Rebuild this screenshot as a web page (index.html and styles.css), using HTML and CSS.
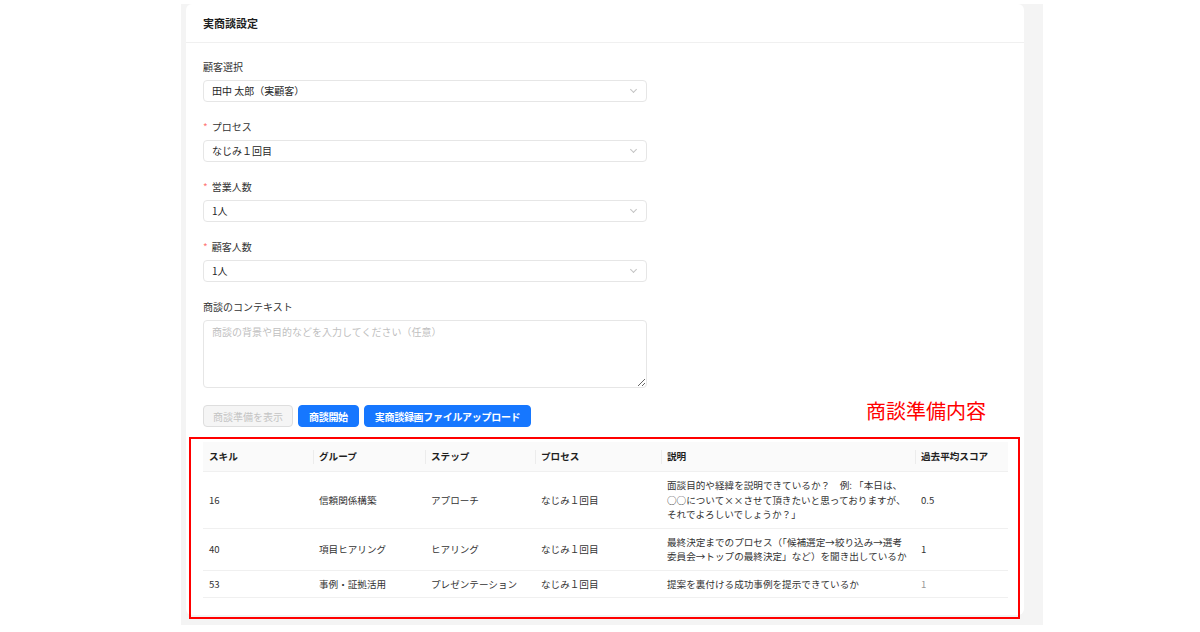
FILE: index.html
```html
<!DOCTYPE html>
<html lang="ja">
<head>
    <meta charset="UTF-8">
    <meta name="viewport" content="width=device-width, initial-scale=1.0">
    <title>実商談設定</title>
    <link rel="stylesheet" href="styles.css">
</head>
<body>
    <div class="frame">
        <div class="card">
            <div class="card-header">実商談設定</div>
            <div class="card-body">
                <div class="form">
                    <div class="form-item">
                        <div class="form-label">顧客選択</div>
                        <div class="select">田中 太郎（実顧客）<span class="arrow"></span></div>
                    </div>
                    <div class="form-item">
                        <div class="form-label required">プロセス</div>
                        <div class="select">なじみ１回目<span class="arrow"></span></div>
                    </div>
                    <div class="form-item">
                        <div class="form-label required">営業人数</div>
                        <div class="select">1人<span class="arrow"></span></div>
                    </div>
                    <div class="form-item">
                        <div class="form-label required">顧客人数</div>
                        <div class="select">1人<span class="arrow"></span></div>
                    </div>
                    <div class="form-item">
                        <div class="form-label">商談のコンテキスト</div>
                        <textarea class="textarea" placeholder="商談の背景や目的などを入力してください（任意）"></textarea>
                    </div>
                    <div class="buttons">
                        <button class="btn" disabled>商談準備を表示</button>
                        <button class="btn btn-primary">商談開始</button>
                        <button class="btn btn-primary">実商談録画ファイルアップロード</button>
                    </div>
                </div>

                <table class="table">
                    <thead>
                        <tr>
                            <th class="col-skill">スキル</th>
                            <th class="col-group">グループ</th>
                            <th class="col-step">ステップ</th>
                            <th class="col-process">プロセス</th>
                            <th class="col-desc">説明</th>
                            <th>過去平均スコア</th>
                        </tr>
                    </thead>
                    <tbody>
                        <tr>
                            <td>16</td>
                            <td>信頼関係構築</td>
                            <td>アプローチ</td>
                            <td>なじみ１回目</td>
                            <td>面談目的や経緯を説明できているか？　例: 「本日は、○○について××させて頂きたいと思っておりますが、それでよろしいでしょうか？」</td>
                            <td>0.5</td>
                        </tr>
                        <tr>
                            <td>40</td>
                            <td>項目ヒアリング</td>
                            <td>ヒアリング</td>
                            <td>なじみ１回目</td>
                            <td>最終決定までのプロセス（「候補選定→絞り込み→選考委員会→トップの最終決定」など）を聞き出しているか</td>
                            <td>1</td>
                        </tr>
                        <tr>
                            <td>53</td>
                            <td>事例・証拠活用</td>
                            <td>プレゼンテーション</td>
                            <td>なじみ１回目</td>
                            <td>提案を裏付ける成功事例を提示できているか</td>
                            <td class="muted">1</td>
                        </tr>
                    </tbody>
                </table>
            </div>
        </div>

        <!-- 注釈 -->
        <div class="note-label">商談準備内容</div>
        <div class="note-box"></div>
    </div>
</body>
</html>
```

FILE: styles.css
```css
body, html {
    margin: 0;
    background-color: #ffffff;
    font-family: "Noto Sans CJK JP", "Noto Sans", sans-serif;
    color: #262626;
}
.frame {
    position: relative;
    width: 857px;
    height: 621px;
    margin: 4px 0 0 181px;
    padding-left: 5px;
    background-color: #f4f4f4;
}
.card {
    width: 838px;
    height: 611px;
    background-color: #ffffff;
    border-radius: 6px;
}
.card-header {
    height: 38px;
    line-height: 38px;
    padding-left: 17px;
    font-size: 11px;
    font-weight: bold;
    color: #1f1f1f;
    border-bottom: 1px solid #f0f0f0;
}
.card-body {
    padding: 16px 16px 0 17px;
}
.form {
    width: 444px;
}
.form-item {
    margin-bottom: 17px;
}
.form-label {
    font-size: 10px;
    line-height: 16px;
    margin-bottom: 5px;
    color: #333;
}
.form-label.required::before {
    content: '*';
    color: #ff7875;
    margin-right: 4px;
}
.select {
    position: relative;
    box-sizing: border-box;
    height: 22px;
    line-height: 20px;
    padding: 0 8px;
    font-size: 10px;
    border: 1px solid #e6e6e6;
    border-radius: 4px;
    color: #262626;
}
.arrow {
    position: absolute;
    right: 10px;
    top: 6px;
    width: 4px;
    height: 4px;
    border-right: 1px solid #c4c4c4;
    border-bottom: 1px solid #c4c4c4;
    transform: rotate(45deg);
}
.textarea {
    display: block;
    box-sizing: border-box;
    width: 444px;
    height: 68px;
    padding: 3px 8px;
    font-family: inherit;
    font-size: 10px;
    line-height: 16px;
    border: 1px solid #e6e6e6;
    border-radius: 4px;
    margin: 0;
}
.textarea::placeholder {
    color: #bfbfbf;
}
.buttons {
    display: flex;
    gap: 5px;
}
.btn {
    height: 22px;
    padding: 0 9px;
    font-family: inherit;
    font-size: 10px;
    border-radius: 4px;
    border: 1px solid #1677ff;
    cursor: pointer;
}
.btn:disabled {
    background-color: #f5f5f5;
    border-color: #dedede;
    color: #c4c4c4;
    cursor: not-allowed;
}
.btn-primary {
    padding: 0 10px;
    background-color: #1677ff;
    color: #ffffff;
    font-weight: bold;
    letter-spacing: -0.3px;
}
.table {
    width: 805px;
    margin-top: 15px;
    border-collapse: collapse;
    font-size: 9.6px;
    line-height: 14.5px;
    color: #333;
}
.table th {
    position: relative;
    height: 29px;
    padding: 0 6px;
    text-align: left;
    font-weight: bold;
    color: #1f1f1f;
    background-color: #fafafa;
    border-bottom: 1px solid #f0f0f0;
}
.table th + th::before {
    content: '';
    position: absolute;
    left: 0;
    top: 8px;
    width: 1px;
    height: 14px;
    background-color: #ececec;
}
.table td {
    padding: 6px 6px;
    border-bottom: 1px solid #f0f0f0;
    vertical-align: middle;
}
.col-skill { width: 98px; }
.col-group { width: 100px; }
.col-step { width: 98px; }
.col-process { width: 114px; }
.col-desc { width: 242px; }
.muted {
    color: #999;
}
.note-label {
    position: absolute;
    left: 685px;
    top: 395px;
    font-size: 20px;
    line-height: 24px;
    color: #ff0000;
}
.note-box {
    position: absolute;
    left: 8px;
    top: 433px;
    width: 827px;
    height: 178px;
    border: 2px solid #ff0000;
}
```
